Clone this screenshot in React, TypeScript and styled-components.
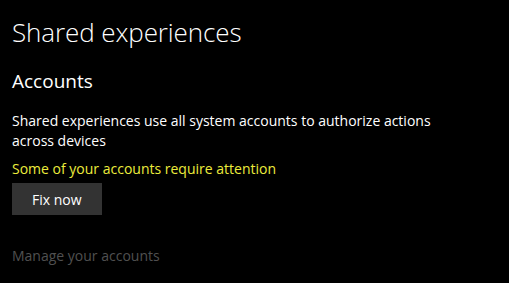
import React from "react";
import styled, { createGlobalStyle } from "styled-components";

const Global = createGlobalStyle`
  html, body { margin: 0; padding: 0; background: #000; }
  body { font-family: "Open Sans", "Noto Sans", sans-serif; color: #fff; }
`;

const Page = styled.main`
  width: 509px;
  height: 283px;
  box-sizing: border-box;
  padding: 14px 12px 0 12px;
  display: flex;
  flex-direction: column;
  align-items: flex-start;
  overflow: hidden;
`;

const Title = styled.h1`
  margin: 0;
  font-size: 26px;
  font-weight: 300;
  line-height: 36px;
  letter-spacing: -0.1px;
`;

const Subtitle = styled.h2`
  margin: 19px 0 0 0;
  font-size: 19px;
  font-weight: 400;
  line-height: 24px;
`;

const Body = styled.p`
  margin: 18px 0 0 0;
  font-size: 14px;
  line-height: 20px;
  width: 440px;
`;

const Warning = styled.p`
  margin: 8px 0 0 0;
  font-size: 14px;
  line-height: 20px;
  color: #ecec3c;
`;

const Button = styled.button`
  margin-top: 4px;
  height: 32px;
  padding: 0 20px;
  border: none;
  background: #333333;
  color: #fff;
  font-family: inherit;
  font-size: 14px;
`;

const Link = styled.a`
  margin-top: 31px;
  font-size: 14px;
  line-height: 20px;
  color: #505050;
  text-decoration: none;
`;

export default function App() {
  return (
    <>
      <Global />
      <Page>
        <Title>Shared experiences</Title>
        <Subtitle>Accounts</Subtitle>
        <Body>Shared experiences use all system accounts to authorize actions across devices</Body>
        <Warning>Some of your accounts require attention</Warning>
        <Button>Fix now</Button>
        <Link>Manage your accounts</Link>
      </Page>
    </>
  );
}
